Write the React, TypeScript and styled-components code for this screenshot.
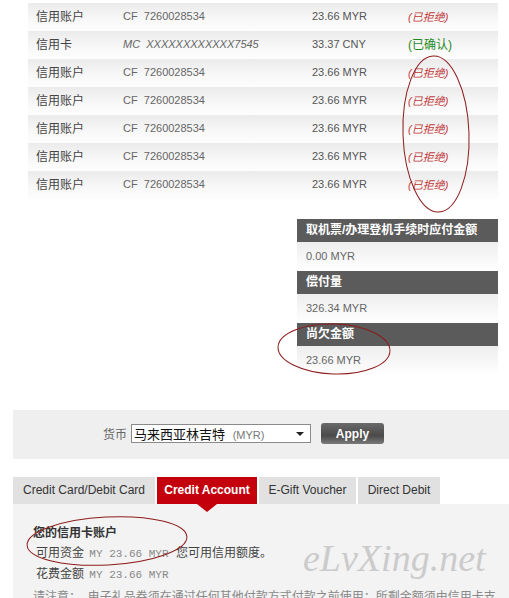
import styled, { createGlobalStyle } from 'styled-components';

const GlobalStyle = createGlobalStyle`
  body {
    margin: 0;
    background: #fff;
    font-family: "Liberation Sans", "Noto Sans CJK SC", sans-serif;
  }
`;

type Status = 'rejected' | 'confirmed';

const rows: { type: string; ref: string; amount: string; status: Status; card?: boolean }[] = [
  { type: '信用账户', ref: 'CF  7260028534', amount: '23.66 MYR', status: 'rejected' },
  { type: '信用卡', ref: 'MC  XXXXXXXXXXXX7545', amount: '33.37 CNY', status: 'confirmed', card: true },
  { type: '信用账户', ref: 'CF  7260028534', amount: '23.66 MYR', status: 'rejected' },
  { type: '信用账户', ref: 'CF  7260028534', amount: '23.66 MYR', status: 'rejected' },
  { type: '信用账户', ref: 'CF  7260028534', amount: '23.66 MYR', status: 'rejected' },
  { type: '信用账户', ref: 'CF  7260028534', amount: '23.66 MYR', status: 'rejected' },
  { type: '信用账户', ref: 'CF  7260028534', amount: '23.66 MYR', status: 'rejected' },
];

const summary = [
  { label: '取机票/办理登机手续时应付金额', value: '0.00 MYR' },
  { label: '偿付量', value: '326.34 MYR' },
  { label: '尚欠金额', value: '23.66 MYR' },
];

const tabs = [
  { label: 'Credit Card/Debit Card', width: 142 },
  { label: 'Credit Account', width: 100 },
  { label: 'E-Gift Voucher', width: 97 },
  { label: 'Direct Debit', width: 82 },
];

const App = () => {
  return (
    <Page>
      <GlobalStyle />
      <PaymentTable>
        {rows.map((r, i) => (
          <Row key={i}>
            <TypeCell>{r.type}</TypeCell>
            <RefCell $italic={r.card}>{r.ref}</RefCell>
            <AmountCell>{r.amount}</AmountCell>
            <StatusCell $status={r.status}>
              {r.status === 'rejected' ? '(已拒绝)' : '(已确认)'}
            </StatusCell>
          </Row>
        ))}
      </PaymentTable>

      <Summary>
        {summary.map((s) => (
          <div key={s.label}>
            <SummaryHead>{s.label}</SummaryHead>
            <SummaryValue>{s.value}</SummaryValue>
          </div>
        ))}
      </Summary>

      <CurrencyBar>
        <CurrencyLabel>货币</CurrencyLabel>
        <FakeSelect>
          <span>
            马来西亚林吉特 <Code>(MYR)</Code>
          </span>
          <Arrow />
        </FakeSelect>
        <ApplyButton>Apply</ApplyButton>
      </CurrencyBar>

      <Tabs>
        {tabs.map((t, i) => (
          <Tab key={t.label} $active={i === 1} $width={t.width}>
            {t.label}
          </Tab>
        ))}
      </Tabs>

      <Panel>
        <PanelTitle>您的信用卡账户</PanelTitle>
        <PanelLine>
          可用资金 <Mono>MY 23.66 MYR</Mono> 您可用信用额度。
        </PanelLine>
        <PanelLine>
          花费金额 <Mono>MY 23.66 MYR</Mono>
        </PanelLine>
        <Note>请注意：  电子礼品券须在通过任何其他付款方式付款之前使用；所剩金额须由信用卡支</Note>
      </Panel>

      <Watermark>eLvXing.net</Watermark>

      <Marks viewBox="0 0 509 598" width="509" height="598">
        <ellipse cx="436" cy="134" rx="33" ry="78" transform="rotate(-2 436 134)" />
        <ellipse cx="334" cy="349" rx="56" ry="25" transform="rotate(2 334 349)" />
        <ellipse cx="107" cy="541" rx="80" ry="24" transform="rotate(-3 107 541)" />
      </Marks>
    </Page>
  );
};

export default App;

const Page = styled.div`
  position: relative;
  width: 509px;
  height: 598px;
  overflow: hidden;
  padding-top: 3px;
  box-sizing: border-box;
`;

const PaymentTable = styled.div`
  margin-left: 28px;
  width: 470px;
  display: flex;
  flex-direction: column;
`;

const Row = styled.div`
  display: grid;
  grid-template-columns: 87px 189px 96px 1fr;
  align-items: center;
  height: 28px;
  padding: 0 0 3px 8px;
  box-sizing: border-box;
  background: linear-gradient(to bottom, #ebebeb 0%, #f8f8f8 60%, #fdfdfd 100%);
`;

const TypeCell = styled.div`
  font-size: 12px;
  color: #444;
`;

const RefCell = styled.div<{ $italic?: boolean }>`
  font-size: 11px;
  color: #666;
  white-space: pre;
  font-style: ${(p) => (p.$italic ? 'italic' : 'normal')};
`;

const AmountCell = styled.div`
  font-size: 11px;
  color: #555;
`;

const StatusCell = styled.div<{ $status: Status }>`
  font-size: ${(p) => (p.$status === 'rejected' ? '11px' : '12px')};
  font-style: ${(p) => (p.$status === 'rejected' ? 'italic' : 'normal')};
  color: ${(p) => (p.$status === 'rejected' ? '#c0393b' : '#1d8a1d')};
`;

const Summary = styled.div`
  margin: 20px 0 0 297px;
  width: 201px;
`;

const SummaryHead = styled.div`
  height: 23px;
  background: #5b5b5b;
  color: #fff;
  font-weight: bold;
  font-size: 12px;
  line-height: 23px;
  padding-left: 9px;
  white-space: nowrap;
`;

const SummaryValue = styled.div`
  height: 29px;
  line-height: 28px;
  padding-left: 9px;
  font-size: 11px;
  color: #666;
  background: linear-gradient(to bottom, #eeeeee 0%, #f8f8f8 60%, #ffffff 100%);
`;

const CurrencyBar = styled.div`
  margin: 35px 0 0 13px;
  height: 49px;
  background: #efefef;
  display: flex;
  align-items: center;
  padding-left: 90px;
  padding-bottom: 2px;
  box-sizing: border-box;
`;

const CurrencyLabel = styled.span`
  font-size: 12px;
  color: #666;
  margin-right: 4px;
`;

const FakeSelect = styled.div`
  width: 180px;
  height: 19px;
  box-sizing: border-box;
  border: 1px solid #8a8a8a;
  background: #fff;
  display: flex;
  align-items: center;
  justify-content: space-between;
  padding: 0 6px 0 2px;
  font-size: 13px;
  color: #111;
`;

const Code = styled.span`
  font-size: 11px;
  color: #777;
  margin-left: 4px;
`;

const Arrow = styled.span`
  width: 0;
  height: 0;
  border-left: 4px solid transparent;
  border-right: 4px solid transparent;
  border-top: 4px solid #222;
`;

const ApplyButton = styled.button`
  margin-left: 10px;
  width: 63px;
  height: 21px;
  border: none;
  border-radius: 3px;
  background: linear-gradient(to bottom, #6a6a6a, #4a4a4a 60%, #7a7a7a);
  color: #fff;
  font-family: "Liberation Sans", sans-serif;
  font-weight: bold;
  font-size: 12px;
  padding: 0;
`;

const Tabs = styled.div`
  margin: 18px 0 0 13px;
  display: flex;
  gap: 2px;
`;

const Tab = styled.div<{ $active?: boolean; $width: number }>`
  position: relative;
  width: ${(p) => p.$width}px;
  height: 27px;
  line-height: 26px;
  text-align: center;
  white-space: nowrap;
  font-size: 12px;
  color: ${(p) => (p.$active ? '#fff' : '#333')};
  font-weight: ${(p) => (p.$active ? 'bold' : 'normal')};
  background: ${(p) => (p.$active ? '#c4000c' : '#e1e1e1')};

  &::after {
    content: '';
    display: ${(p) => (p.$active ? 'block' : 'none')};
    position: absolute;
    left: 50%;
    bottom: -8px;
    margin-left: -10px;
    border-left: 10px solid transparent;
    border-right: 10px solid transparent;
    border-top: 8px solid #c4000c;
  }
`;

const Panel = styled.div`
  margin-left: 13px;
  height: 200px;
  background: #f3f3f3;
  padding: 19px 0 0 20px;
  box-sizing: border-box;
  color: #444;
`;

const PanelTitle = styled.div`
  font-size: 12px;
  font-weight: bold;
  color: #333;
  height: 20px;
  line-height: 20px;
`;

const PanelLine = styled.div`
  font-size: 12px;
  height: 21px;
  line-height: 21px;
  padding-left: 3px;
  color: #444;
`;

const Mono = styled.span`
  font-family: "Liberation Mono", monospace;
  font-size: 11px;
  color: #888;
  margin: 0 4px 0 2px;
`;

const Note = styled.div`
  font-size: 12px;
  color: #888;
  white-space: pre;
  margin-top: 2px;
  line-height: 20px;
`;

const Watermark = styled.div`
  position: absolute;
  left: 303px;
  top: 536px;
  font-family: "Liberation Serif", serif;
  font-style: italic;
  font-size: 38px;
  color: #cbcbcb;
`;

const Marks = styled.svg`
  position: absolute;
  left: 0;
  top: 0;
  pointer-events: none;
  fill: none;
  stroke: #8e1b1b;
  stroke-width: 1;
`;
